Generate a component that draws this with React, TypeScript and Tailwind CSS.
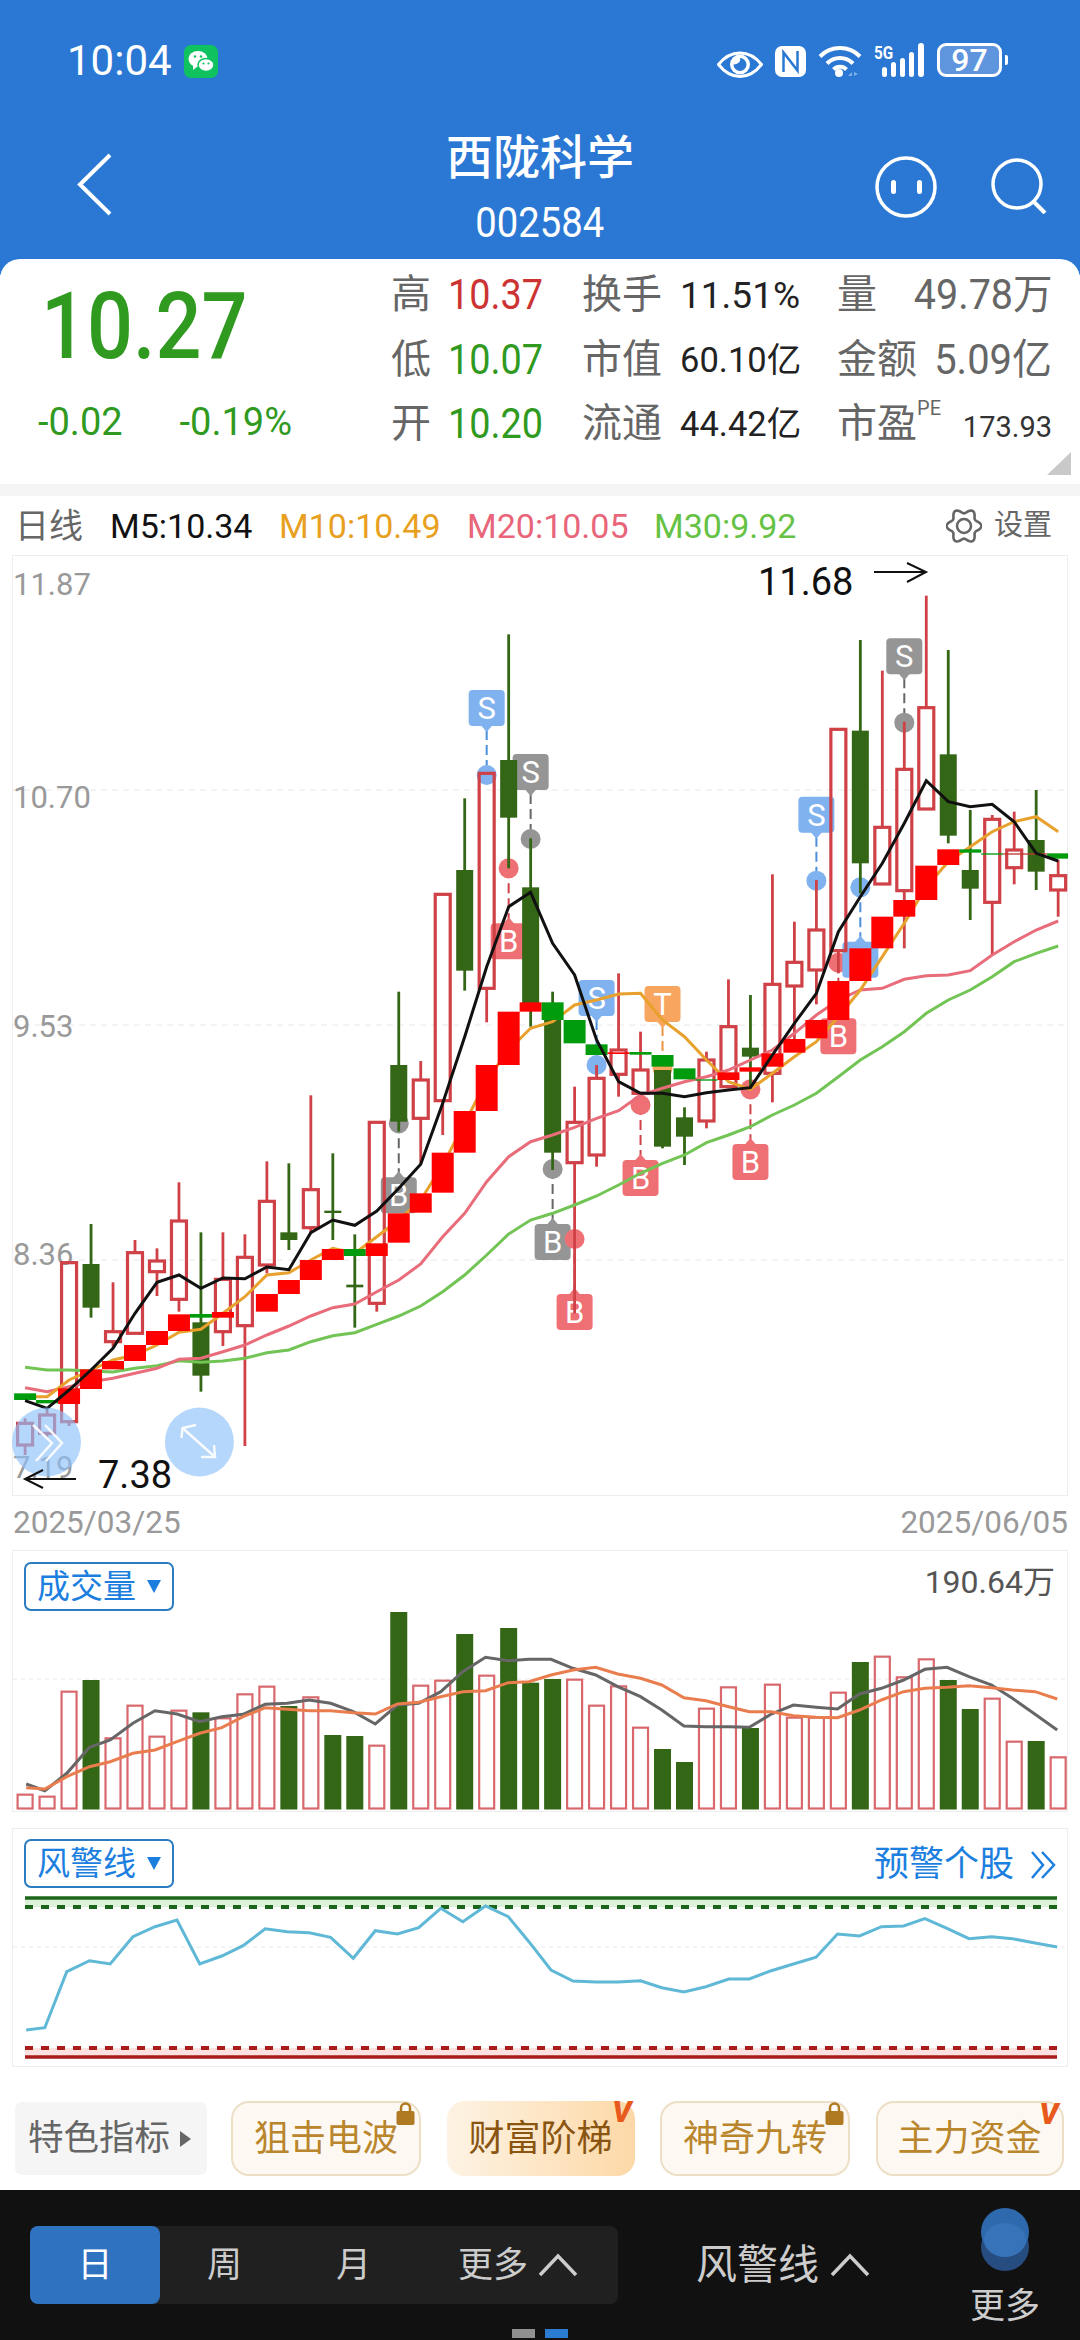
import React from "react";

const X = (i: number) => 25.1 + 21.98 * i;
const a = (z: number) => 540 + z / 3;
const b = (z: number) => 1040 + z / 3;

type C = ["h" | "g", number, number, number, number];
const candles: C[] = [
  ["h", b(1135), b(1150), b(1215), b(1245)],
  ["h", b(1110), b(1125), b(1180), b(1190)],
  ["h", b(668), b(668), b(1145), b(1158)],
  ["g", b(552), b(672), b(803), b(833)],
  ["h", b(727), b(875), b(905), b(920)],
  ["h", b(600), b(638), b(880), b(880)],
  ["h", b(625), b(663), b(695), b(768)],
  ["h", b(427), b(543), b(778), b(815)],
  ["g", b(577), b(847), b(1007), b(1055)],
  ["h", b(577), b(718), b(875), b(918)],
  ["h", b(583), b(652), b(857), b(1218)],
  ["h", b(364), b(484), b(675), b(700)],
  ["g", b(370), b(577), b(600), b(630)],
  ["h", b(166), b(449), b(563), b(580)],
  ["g", b(340), b(512), b(519), b(600)],
  ["g", b(583), b(734), b(742), b(863)],
  ["h", b(247), b(247), b(790), b(815)],
  ["g", a(1355), b(75), b(245), b(275)],
  ["h", b(63), b(120), b(235), b(370)],
  ["h", a(1063), a(1063), b(182), b(285)],
  ["g", a(775), a(990), a(1292), a(1352)],
  ["h", a(700), a(700), a(1345), a(1447)],
  ["g", a(283), a(660), a(833), a(985)],
  ["g", a(895), a(1042), a(1390), a(1460)],
  ["g", a(1355), a(1390), b(338), b(390)],
  ["h", b(140), b(247), b(368), b(820)],
  ["h", b(75), b(115), b(345), b(380)],
  ["h", a(1300), b(30), b(103), b(170)],
  ["h", a(1475), b(90), b(160), b(165)],
  ["g", b(90), b(90), b(320), b(325)],
  ["g", b(202), b(232), b(290), b(375)],
  ["h", b(35), b(60), b(243), b(265)],
  ["h", a(1318), a(1460), b(140), b(145)],
  ["g", a(1365), a(1523), b(50), b(150)],
  ["h", a(1003), a(1333), b(100), b(187)],
  ["h", a(1145), a(1267), a(1338), a(1500)],
  ["h", a(1020), a(1170), a(1290), a(1393)],
  ["h", a(568), a(568), a(1232), a(1300)],
  ["g", a(300), a(572), a(970), a(1060)],
  ["h", a(392), a(862), a(1032), a(1032)],
  ["h", a(545), a(688), a(1052), a(1225)],
  ["h", a(167), a(503), a(807), a(807)],
  ["g", a(330), a(643), a(887), a(910)],
  ["g", a(810), a(990), a(1046), a(1140)],
  ["h", a(825), a(838), a(1087), a(1245)],
  ["h", a(815), a(930), a(983), a(1033)],
  ["g", a(750), a(900), a(995), a(1050)],
  ["h", a(960), a(1007), a(1050), a(1130)],
];

const G = "#009c0e";
const R = "#ff0000";
const blocks: [number, number, number, string][] = [
  [0, b(1060), b(1080), G], [1, b(1080), b(1090), G], [2, b(1045), b(1092), R], [3, b(988), b(1047), R],
  [4, b(963), b(988), R], [5, b(915), b(963), R], [6, b(873), b(915), R], [7, b(823), b(873), R],
  [8, b(822), b(833), G], [9, b(816), b(833), R], [11, b(762), b(815), R], [12, b(720), b(762), R],
  [13, b(660), b(720), R], [14, b(627), b(660), R], [15, b(627), b(648), G], [16, b(610), b(648), R],
  [17, b(520), b(608), R], [18, b(460), b(518), R], [19, b(338), b(458), R], [20, b(213), b(338), R],
  [21, b(75), b(213), R], [22, a(1415), b(75), R], [23, a(1387), a(1415), R], [24, a(1387), a(1440), G],
  [25, a(1440), a(1510), G], [26, a(1513), a(1545), G], [27, b(37), b(42), R], [28, b(36), b(44), G],
  [29, b(45), b(80), G], [30, b(85), b(118), G], [31, b(118), b(122), G], [32, b(97), b(120), R],
  [33, b(82), b(95), R], [34, b(40), b(80), R], [35, a(1497), a(1538), R], [36, a(1440), a(1495), R],
  [37, a(1323), a(1440), R], [38, a(1225), a(1323), R], [39, a(1130), a(1225), R], [40, a(1080), a(1130), R],
  [41, a(977), a(1080), R], [42, a(928), a(975), R], [43, a(928), a(938), G], [44, a(940), a(944), G],
  [45, a(940), a(944), "#c03a30"], [46, a(940), a(944), "#c03a30"], [47, a(940), a(956), G],
];

const black = [b(1082), b(1105), b(1050), b(990), b(925), b(820), b(727), b(705), b(745), b(714), b(716), b(681), b(689), b(578), b(540), b(556), b(513), b(445), b(373), b(190), b(-10), a(1280), a(1100), a(1057), a(1210), a(1305), a(1500), b(125), b(160), b(160), b(170), b(158), b(150), b(143), b(45), a(1450), a(1360), a(1175), a(1070), a(970), a(850), a(722), a(785), a(800), a(793), a(845), a(940), a(963)];
const orange = [b(1070), b(1070), b(1020), b(990), b(960), b(945), b(915), b(877), b(868), b(820), b(770), b(705), b(698), b(660), b(625), b(640), b(590), b(540), b(480), b(375), b(250), b(120), b(30), a(1465), a(1445), a(1395), a(1380), a(1362), a(1360), a(1440), a(1490), b(60), b(125), b(148), b(100), b(50), b(5), a(1430), a(1350), a(1250), a(1150), a(1040), a(965), a(920), a(875), a(845), a(830), a(875)];
const pink = [b(1043), b(1055), b(1040), b(1025), b(1015), b(1000), b(985), b(958), b(955), b(935), b(915), b(885), b(858), b(828), b(803), b(792), b(755), b(720), b(672), b(590), b(520), b(425), b(350), b(305), b(285), b(262), b(235), b(212), b(165), b(145), b(125), b(110), b(90), b(60), b(30), a(1480), a(1425), a(1380), a(1350), a(1345), a(1318), a(1307), a(1305), a(1292), a(1245), a(1205), a(1170), a(1143)];
const lgreen = [b(982), b(990), b(990), b(993), b(996), b(985), b(977), b(962), b(967), b(963), b(955), b(938), b(930), b(905), b(887), b(878), b(853), b(828), b(798), b(755), b(705), b(645), b(582), b(540), b(520), b(495), b(468), b(435), b(400), b(370), b(345), b(308), b(285), b(260), b(225), b(195), b(160), b(110), b(60), b(20), a(1475), a(1420), a(1380), a(1350), a(1310), a(1265), a(1240), a(1218)];
const poly = (ys: number[]) => ys.map((y, i) => `${X(i).toFixed(1)},${y.toFixed(1)}`).join(" ");

type B = { i: number; t: string; top: number; dot: number; c: string; l: string };
const BLUE = "#7fb2ef", BL = "#4a8fdc", GRAY = "#959595", GL = "#666666", RED = "#ee7074", RL = "#cf4146", OR = "#f8a560", OL = "#ee9440";
const badges: B[] = [
  { i: 21, t: "S", top: a(450), dot: a(705), c: BLUE, l: BL },
  { i: 23, t: "S", top: a(642), dot: a(897), c: GRAY, l: GL },
  { i: 22, t: "B", top: a(1150), dot: a(985), c: RED, l: RL },
  { i: 17, t: "B", top: b(412), dot: b(250), c: GRAY, l: GL },
  { i: 26, t: "S", top: a(1320), dot: b(75), c: BLUE, l: BL },
  { i: 29, t: "T", top: a(1338), dot: b(85), c: OR, l: OL },
  { i: 24, t: "B", top: b(552), dot: b(387), c: GRAY, l: GL },
  { i: 25, t: "B", top: b(762), dot: b(597), c: RED, l: RL },
  { i: 28, t: "B", top: b(360), dot: b(195), c: RED, l: RL },
  { i: 33, t: "B", top: b(312), dot: b(148), c: RED, l: RL },
  { i: 37, t: "B", top: a(1435), dot: a(1268), c: RED, l: RL },
  { i: 36, t: "S", top: a(770), dot: a(1022), c: BLUE, l: BL },
  { i: 40, t: "S", top: a(295), dot: a(548), c: GRAY, l: GL },
  { i: 38, t: "S", top: a(1205), dot: a(1042), c: BLUE, l: BL },
];

const volTops = [764, 770, 455, 420, 595, 497, 590, 512, 517, 535, 463, 440, 498, 472, 585, 588, 617, 216, 437, 422, 282, 407, 264, 428, 417, 419, 497, 439, 563, 627, 666, 506, 442, 564, 434, 533, 533, 458, 366, 350, 412, 358, 420, 507, 476, 605, 603, 652];
const volGreen = new Set([3, 8, 12, 14, 15, 17, 20, 22, 23, 24, 29, 30, 33, 38, 42, 43, 46]);
const volGray: [number, number][] = [[38, 732], [65, 752], [97, 700], [130, 622], [160, 600], [193, 550], [225, 512], [257, 522], [290, 545], [322, 530], [353, 523], [385, 493], [417, 490], [449, 480], [480, 490], [513, 515], [545, 552], [577, 495], [608, 490], [640, 455], [672, 395], [705, 352], [738, 362], [768, 358], [800, 358], [832, 385], [865, 405], [897, 440], [930, 470], [961, 510], [993, 558], [1025, 560], [1058, 560], [1088, 562], [1120, 522], [1152, 495], [1185, 502], [1216, 507], [1248, 462], [1280, 445], [1312, 420], [1343, 388], [1375, 382], [1407, 410], [1440, 435], [1470, 475], [1503, 523], [1535, 570]];
const volOrange: [number, number][] = [[38, 743], [65, 747], [97, 710], [130, 680], [160, 665], [193, 640], [225, 630], [257, 605], [290, 580], [322, 563], [353, 530], [385, 503], [417, 508], [449, 512], [480, 512], [513, 518], [545, 522], [577, 492], [608, 487], [640, 470], [672, 455], [705, 452], [738, 428], [768, 425], [800, 405], [832, 390], [865, 382], [897, 402], [930, 415], [961, 435], [993, 473], [1025, 482], [1058, 500], [1088, 515], [1120, 515], [1152, 527], [1185, 532], [1216, 533], [1248, 510], [1280, 480], [1312, 455], [1343, 445], [1375, 442], [1407, 437], [1440, 443], [1470, 450], [1503, 455], [1535, 477]];
const cyan: [number, number][] = [[38, 630], [65, 623], [97, 455], [130, 422], [160, 432], [193, 350], [225, 320], [257, 300], [290, 432], [322, 408], [353, 377], [385, 326], [417, 335], [449, 338], [480, 352], [513, 415], [545, 332], [577, 342], [608, 323], [640, 265], [672, 305], [705, 258], [738, 290], [768, 365], [800, 450], [832, 483], [865, 486], [897, 486], [930, 482], [961, 503], [993, 516], [1025, 500], [1058, 477], [1088, 477], [1120, 452], [1152, 432], [1185, 412], [1216, 342], [1248, 348], [1280, 320], [1312, 318], [1343, 296], [1375, 325], [1407, 356], [1440, 350], [1470, 356], [1503, 369], [1535, 381]];
const zp = (pts: [number, number][], oy: number) => pts.map(([x, y]) => `${(x / 1.452).toFixed(1)},${(oy + y / 3).toFixed(1)}`).join(" ");

const gearPts = Array.from({ length: 72 }, (_, k) => {
  const t = (k / 72) * Math.PI * 2;
  const r = 15 + 2.4 * Math.cos(6 * t);
  return `${(18 + r * Math.cos(t)).toFixed(2)},${(18 + r * Math.sin(t)).toFixed(2)}`;
}).join(" ");

function MainChart() {
  return (
    <svg className="absolute -left-px -top-px" width={1056} height={941} viewBox="12 555 1056 941">
      <g stroke="#e8e8e8" strokeWidth={1} strokeDasharray="6 5">
        <line x1={13} x2={1067} y1={790} y2={790} />
        <line x1={13} x2={1067} y1={1025} y2={1025} />
        <line x1={13} x2={1067} y1={1260} y2={1260} />
      </g>
      <g className="font-[family-name:Roboto,sans-serif] text-[31px] fill-[#999999]">
        <text x={13} y={595}>11.87</text>
        <text x={13} y={808}>10.70</text>
        <text x={13} y={1037}>9.53</text>
        <text x={13} y={1265}>8.36</text>
        <text x={13} y={1478}>7.19</text>
      </g>
      {badges.map((d, k) => {
        const x = X(d.i);
        const up = d.dot < d.top;
        const pointer = up
          ? `${x - 6},${d.top + 1} ${x},${d.top - 6} ${x + 6},${d.top + 1}`
          : `${x - 6},${d.top + 35} ${x},${d.top + 42} ${x + 6},${d.top + 35}`;
        return (
          <g key={k}>
            <line x1={x} x2={x} y1={up ? d.dot : d.top + 40} y2={up ? d.top : d.dot} stroke={d.l} strokeWidth={2} strokeDasharray="10 5" />
            <circle cx={x} cy={d.dot} r={10} fill={d.c} />
            <rect x={x - 18} y={d.top} width={36} height={36} rx={4} fill={d.c} />
            <polygon points={pointer} fill={d.c} />
            <text x={x} y={d.top + 29} textAnchor="middle" className="font-[family-name:Roboto,sans-serif] text-[31px] fill-white">{d.t}</text>
          </g>
        );
      })}
      {candles.map(([k, hi, t, bt, lo], i) => {
        const x = X(i);
        const col = k === "h" ? "#cf4146" : "#336615";
        return (
          <g key={i}>
            {k === "h" ? (
              <>
                <line x1={x} x2={x} y1={hi} y2={t} stroke={col} strokeWidth={2.8} />
                <line x1={x} x2={x} y1={bt} y2={lo} stroke={col} strokeWidth={2.8} />
                <rect x={x - 7.5} y={t} width={15} height={bt - t} fill="none" stroke={col} strokeWidth={3.2} />
              </>
            ) : (
              <>
                <line x1={x} x2={x} y1={hi} y2={lo} stroke={col} strokeWidth={2.8} />
                <rect x={x - 8.5} y={t} width={17} height={bt - t} fill={col} />
              </>
            )}
          </g>
        );
      })}
      <polyline points={poly(lgreen)} fill="none" stroke="#72c455" strokeWidth={3} />
      <polyline points={poly(pink)} fill="none" stroke="#e96c7b" strokeWidth={3} />
      <polyline points={poly(orange)} fill="none" stroke="#e8a12c" strokeWidth={3} />
      {blocks.map(([i, t, bt, c]) => (
        <rect key={i} x={X(i) - 11} y={t} width={22} height={bt - t} fill={c} />
      ))}
      <polyline points={poly(black)} fill="none" stroke="#111111" strokeWidth={3} />
      <circle cx={46.5} cy={1442} r={34.5} fill="#8fc2fa" fillOpacity={0.65} />
      <circle cx={199.4} cy={1442} r={34.5} fill="#8fc2fa" fillOpacity={0.65} />
      <g fill="none" stroke="#ffffff" strokeWidth={2.5} opacity={0.9}>
        <polyline points="33,1425 52,1443 36,1461" />
        <polyline points="45,1425 62,1443 46,1461" />
        <line x1={182.5} y1={1428} x2={215} y2={1457} />
        <polyline points="196,1425 182.5,1428 181.5,1438" />
        <polyline points="201,1457 215,1457 214,1445" />
      </g>
      <g fill="none" stroke="#111111" strokeWidth={2}>
        <line x1={25} x2={76} y1={1479} y2={1479} />
        <polyline points="43,1470 25,1479 43,1488" />
        <line x1={874} x2={926} y1={572} y2={572} />
        <polyline points="907,563 926,572 907,582" />
      </g>
      <g className="font-[family-name:Roboto,sans-serif] text-[38px] fill-[#111111]">
        <text x={98} y={1488}>7.38</text>
        <text x={758} y={595}>11.68</text>
      </g>
    </svg>
  );
}

function VolChart() {
  return (
    <svg className="absolute -left-px -top-px" width={1056} height={262} viewBox="12 1550 1056 262">
      <line x1={13} x2={1067} y1={1679} y2={1679} stroke="#e8e8e8" strokeDasharray="4 4" />
      {volTops.map((z, i) => {
        const y = 1540 + z / 3;
        return volGreen.has(i) ? (
          <rect key={i} x={X(i) - 8.5} y={y} width={17} height={1809.5 - y} fill="#336615" />
        ) : (
          <rect key={i} x={X(i) - 7.5} y={y} width={15} height={1808.5 - y} fill="none" stroke="#d9686d" strokeWidth={2.2} />
        );
      })}
      <polyline points={zp(volGray, 1540)} fill="none" stroke="#666666" strokeWidth={3} />
      <polyline points={zp(volOrange, 1540)} fill="none" stroke="#ea7d4e" strokeWidth={3} />
    </svg>
  );
}

function WarnChart() {
  return (
    <svg className="absolute -left-px -top-px" width={1056} height={239} viewBox="12 1828 1056 239">
      <rect x={25} y={1898} width={1032} height={9} fill="#dcf2d8" />
      <rect x={25} y={2048} width={1032} height={9} fill="#fde0e0" />
      <line x1={25} x2={1057} y1={1898} y2={1898} stroke="#1c661c" strokeWidth={3.5} />
      <line x1={25} x2={1057} y1={1907} y2={1907} stroke="#1c661c" strokeWidth={4} strokeDasharray="8 8" />
      <line x1={25} x2={1057} y1={2048} y2={2048} stroke="#a91c1c" strokeWidth={4} strokeDasharray="8 8" />
      <line x1={25} x2={1057} y1={2057} y2={2057} stroke="#a91c1c" strokeWidth={3.5} />
      <line x1={13} x2={1067} y1={1947} y2={1947} stroke="#e8e8e8" strokeDasharray="4 4" />
      <polyline points={zp(cyan, 1820)} fill="none" stroke="#5fb8d6" strokeWidth={3} />
    </svg>
  );
}

function Dropdown({ label }: { label: string }) {
  return (
    <div className="flex h-[49px] w-[150px] items-center gap-[11px] rounded-[7px] border-2 border-[#2b7cc0] pl-[11px] text-[33px] leading-none text-[#1c7fe0]">
      <span>{label}</span>
      <span className="h-0 w-0 border-x-[7px] border-t-[13px] border-x-transparent border-t-[#1c7fe0]" />
    </div>
  );
}

function Lock() {
  return (
    <svg className="absolute -top-px right-[4px]" width={19} height={23} viewBox="0 0 19 23">
      <path d="M5 10V6a4.500 4.500 0 0 1 9 0v4" fill="none" stroke="#b07a22" strokeWidth={2.5} />
      <rect x={0.5} y={9} width={18} height={14} rx={2} fill="#b07a22" />
    </svg>
  );
}

const label = "text-[40px] leading-none text-[#666666]";
const priceCls = "inline-block origin-left scale-x-[0.9] text-[42px] leading-none";

function Stat({ l, v, cls }: { l: string; v: string; cls: string }) {
  return (
    <div className="flex h-[64.5px] items-center">
      <span className={`w-[57px] ${label}`}>{l}</span>
      <span className={cls}>{v}</span>
    </div>
  );
}

export default function App() {
  const g = "text-[38px] leading-none text-[#2f9a1f]";
  const k = "text-[34.500px] leading-none text-[#222222]";
  return (
    <div className="relative h-[2340px] w-[1080px] overflow-hidden bg-white font-[family-name:Roboto,'Noto_Sans_CJK_SC',sans-serif]">
      {/* blue header */}
      <div className="h-[275px] bg-[#2a78d4] text-white">
        <div className="flex h-[122px] items-start justify-between pl-[67px] pr-[72px] pt-[43px]">
          <div className="flex h-[36px] items-center gap-[12px]">
            <span className="text-[42px] leading-none">10:04</span>
            <svg width={34} height={33} viewBox="0 0 34 33">
              <rect width={34} height={33} rx={7} fill="#0fc25f" />
              <ellipse cx={14} cy={14} rx={9.500} ry={8} fill="#fff" />
              <polygon points="9,20 9,25 14,21" fill="#fff" />
              <ellipse cx={22} cy={20} rx={8} ry={6.500} fill="#fff" stroke="#0fc25f" strokeWidth={1.5} />
              <circle cx={11} cy={11.500} r={1.300} fill="#0fc25f" />
              <circle cx={17} cy={11.500} r={1.300} fill="#0fc25f" />
              <circle cx={19.500} cy={18.500} r={1.100} fill="#0fc25f" />
              <circle cx={24.500} cy={18.500} r={1.100} fill="#0fc25f" />
            </svg>
          </div>
          <div className="flex items-start">
            <svg width={46} height={36} viewBox="0 0 46 36">
              <path d="M1.500 21.500C9 12 16 10 23 10s14 2 21.500 11.500C37 31 30 33.500 23 33.500S9 31 1.500 21.500Z" fill="none" stroke="#fff" strokeWidth={3} />
              <circle cx={23} cy={21.500} r={10} fill="#fff" />
              <path d="M16.500 21.500a6.500 6.500 0 1 0 6.500-6.500c1 3 -1 6 -6.500 6.500Z" fill="#2a78d4" />
            </svg>
            <svg className="ml-[12px]" width={31} height={36} viewBox="0 0 31 36">
              <rect x={0} y={3} width={31} height={31} rx={7} fill="#fff" />
              <path d="M8.500 29V9.500L22.500 27.500V8" fill="none" stroke="#2a78d4" strokeWidth={2.5} />
            </svg>
            <svg className="ml-[12px]" width={44} height={36} viewBox="0 0 44 36">
              <g fill="none" stroke="#fff" strokeWidth={4}>
                <path d="M2 13.500a28 28 0 0 1 40 0" />
                <path d="M9 20.500a18 18 0 0 1 26 0" />
                <path d="M15.500 26.500a9 9 0 0 1 13 0" />
              </g>
              <circle cx={21} cy={30} r={4} fill="#fff" />
              <polygon points="30,33 34,29 34,33" fill="#7fb0e8" />
              <polygon points="36,29 40,31 36,33" fill="#7fb0e8" />
            </svg>
            <div className="relative ml-[11px] h-[36px] w-[51px]">
              <span className="absolute left-[1px] top-[1px] origin-left scale-x-[0.85] text-[18px] font-bold leading-none">5G</span>
              <svg className="absolute left-0 top-0" width={51} height={36} viewBox="0 0 51 36">
                <g fill="#fff">
                  <rect x={9} y={24} width={5} height={10} rx={2.500} />
                  <rect x={18} y={19} width={5} height={15} rx={2.500} />
                  <rect x={27} y={15} width={5} height={19} rx={2.500} />
                  <rect x={36} y={9} width={5} height={25} rx={2.500} />
                  <rect x={45} y={0} width={6} height={34} rx={3} />
                </g>
              </svg>
            </div>
            <div className="ml-[13px] flex h-[34px] w-[65px] items-center justify-center rounded-[9px] border-[3px] border-white bg-[#5e95dd] text-[32px] font-medium leading-none">97</div>
            <span className="ml-[3px] mt-[12px] h-[10px] w-[3px] rounded-r-[2px] bg-white" />
          </div>
        </div>
        <div className="grid h-[137px] grid-cols-[1fr_auto_1fr]">
          <div className="pl-[77px] pt-[31px]">
            <svg width={35} height={63} viewBox="0 0 35 63">
              <polyline points="33,2 3,31.500 33,61" fill="none" stroke="#fff" strokeWidth={4} />
            </svg>
          </div>
          <div className="flex flex-col items-center pt-[8px]">
            <span className="text-[47px] font-medium leading-[56px]">西陇科学</span>
            <span className="mt-[15px] origin-center scale-x-[0.91] text-[42px] leading-[44px]">002584</span>
          </div>
          <div className="flex items-start justify-end gap-[52px] pr-[33px] pt-[34px]">
            <svg width={65} height={62} viewBox="0 0 65 62">
              <circle cx={32} cy={31} r={29} fill="none" stroke="#fff" strokeWidth={3.500} />
              <rect x={17} y={24} width={5} height={14} rx={2.500} fill="#fff" />
              <rect x={43} y={24} width={5} height={14} rx={2.500} fill="#fff" />
            </svg>
            <svg className="mt-[2px]" width={56} height={56} viewBox="0 0 56 56">
              <circle cx={26} cy={26} r={24} fill="none" stroke="#fff" strokeWidth={3.500} />
              <line x1={42} y1={43} x2={54} y2={55} stroke="#fff" strokeWidth={4} />
            </svg>
          </div>
        </div>
      </div>

      {/* quote card */}
      <div className="relative -mt-[16px] flex h-[225px] rounded-t-[20px] bg-white">
        <div className="w-[391px] shrink-0">
          <div className="ml-[41px] mt-[22px] h-[92px] origin-left scale-x-[0.87] text-[93px] font-medium leading-[92px] text-[#2f9a1f]">10.27</div>
          <div className="ml-[38px] mt-[30px] flex gap-[57px]">
            <span className={g}>-0.02</span>
            <span className={g}>-0.19%</span>
          </div>
        </div>
        <div className="grid grid-cols-[191px_255px_215px] grid-rows-[64.5px_64.5px_64.5px] pt-[4px]">
          <Stat l="高" v="10.37" cls={`${priceCls} text-[#cc3333]`} />
          <div className="flex h-[64.5px] items-center"><span className={`w-[98px] ${label}`}>换手</span><span className="text-[37px] leading-none text-[#222222]">11.51%</span></div>
          <div className="flex h-[64.5px] items-center justify-between"><span className={label}>量</span><span className="origin-right scale-x-[0.94] text-[42px] leading-none text-[#666666]">49.78万</span></div>
          <Stat l="低" v="10.07" cls={`${priceCls} text-[#2f9a1f]`} />
          <div className="flex h-[64.5px] items-center"><span className={`w-[98px] ${label}`}>市值</span><span className={k}>60.10亿</span></div>
          <div className="flex h-[64.5px] items-center justify-between"><span className={label}>金额</span><span className="origin-right scale-x-[0.95] text-[42px] leading-none text-[#666666]">5.09亿</span></div>
          <Stat l="开" v="10.20" cls={`${priceCls} text-[#2f9a1f]`} />
          <div className="flex h-[64.5px] items-center"><span className={`w-[98px] ${label}`}>流通</span><span className={k}>44.42亿</span></div>
          <div className="flex h-[64.5px] items-center justify-between">
            <span className={`relative ${label}`}>市盈<sup className="absolute -right-[24px] top-[-6px] text-[20px] leading-none">PE</sup></span>
            <span className="mt-[6px] text-[29px] leading-none text-[#333333]">173.93</span>
          </div>
        </div>
        <svg className="absolute right-[9px] top-[193px]" width={24} height={23} viewBox="0 0 24 23">
          <polygon points="24,0 24,23 0,23" fill="#c9c9c9" />
        </svg>
      </div>

      <div className="h-[12px] bg-[#f5f5f5]" />

      {/* legend */}
      <div className="flex h-[59px] items-center pl-[15px] pr-[28px] text-[34px] leading-none">
        <span className="w-[95px] text-[#666666]">日线</span>
        <span className="w-[169px] text-[#111111]">M5:10.34</span>
        <span className="w-[188px] text-[#e8a020]">M10:10.49</span>
        <span className="w-[187px] text-[#e8657a]">M20:10.05</span>
        <span className="text-[#66c244]">M30:9.92</span>
        <span className="ml-auto flex items-center gap-[12px] text-[29px] text-[#666666]">
          <svg width={36} height={36} viewBox="0 0 36 36">
            <polygon points={gearPts} fill="none" stroke="#666666" strokeWidth={2.6} />
            <circle cx={18} cy={18} r={7} fill="none" stroke="#666666" strokeWidth={2.6} />
          </svg>
          设置
        </span>
      </div>

      {/* main chart */}
      <div className="relative ml-[12px] h-[941px] w-[1056px] border border-[#eeeeee]">
        <MainChart />
      </div>
      <div className="flex h-[54px] items-start justify-between pl-[13px] pr-[12px] pt-[7px] text-[31.500px] leading-[40px] text-[#999999]">
        <span>2025/03/25</span>
        <span>2025/06/05</span>
      </div>

      {/* volume */}
      <div className="relative ml-[12px] h-[262px] w-[1056px] border border-[#eeeeee]">
        <VolChart />
        <div className="absolute inset-x-0 top-[11px] flex items-start justify-between pl-[11px] pr-[12px]">
          <Dropdown label="成交量" />
          <span className="mt-[2px] text-[32px] leading-[36px] text-[#555555]">190.64万</span>
        </div>
      </div>

      {/* warning */}
      <div className="relative ml-[12px] mt-[16px] h-[239px] w-[1056px] border border-[#eeeeee]">
        <WarnChart />
        <div className="absolute inset-x-0 top-[10px] flex items-start justify-between pl-[11px] pr-[11px]">
          <Dropdown label="风警线" />
          <span className="mt-[6px] flex items-center gap-[16px] text-[35px] leading-[40px] text-[#1c7fe0]">
            预警个股
            <svg width={26} height={30} viewBox="0 0 26 30">
              <polyline points="2,2 13,15 2,28" fill="none" stroke="#1c7fe0" strokeWidth={2.500} />
              <polyline points="12,2 24,15 12,28" fill="none" stroke="#1c7fe0" strokeWidth={2.500} />
            </svg>
          </span>
        </div>
      </div>

      {/* chips */}
      <div className="ml-[15px] mt-[34px] flex h-[75px] items-center gap-[25.5px] text-[36px] leading-none">
        <div className="mr-[-1.5px] flex h-[73px] w-[192px] items-center gap-[10px] rounded-[7px] bg-[#f5f5f5] pl-[13px] text-[35.500px] text-[#666666]">
          特色指标
          <span className="h-0 w-0 border-y-[8px] border-l-[11px] border-y-transparent border-l-[#666666]" />
        </div>
        <div className="relative flex h-[75px] w-[190px] items-center justify-center rounded-[18px] border-2 border-[#ecdfc6] bg-[#fdf9f2] text-[#b9862d]">狙击电波<Lock /></div>
        <div className="relative flex h-[75px] w-[188px] items-center justify-center rounded-[18px] bg-linear-to-r from-[#fdf3e4] to-[#fdd8a6] text-[#8a5510]">财富阶梯<span className="absolute right-[3px] top-[-6px] text-[30px] font-black italic leading-[34px] text-[#e8591c]">V</span></div>
        <div className="relative flex h-[75px] w-[190px] items-center justify-center rounded-[18px] border-2 border-[#ecdfc6] bg-[#fdf9f2] text-[#b9862d]">神奇九转<Lock /></div>
        <div className="relative flex h-[75px] w-[188px] items-center justify-center rounded-[18px] border-2 border-[#ecdfc6] bg-[#fdf9f2] text-[#b9862d]">主力资金<span className="absolute right-[3px] top-[-6px] text-[30px] font-black italic leading-[34px] text-[#e8591c]">V</span></div>
      </div>

      {/* bottom bar */}
      <div className="relative mt-[14px] flex h-[150px] bg-[#111111] pl-[30px] pt-[36px] text-[#cccccc]">
        <div className="flex h-[78px] w-[588px] rounded-[8px] bg-[#202020] text-[35px] leading-none">
          <div className="flex w-[130px] items-center justify-center rounded-[8px] bg-[#2f72c0] text-white">日</div>
          <div className="flex w-[129px] items-center justify-center">周</div>
          <div className="flex w-[129px] items-center justify-center">月</div>
          <div className="flex w-[200px] items-center justify-center gap-[10px]">
            更多
            <svg width={40} height={24} viewBox="0 0 40 24"><polyline points="2,22 20,3 38,22" fill="none" stroke="#cccccc" strokeWidth={3.500} /></svg>
          </div>
        </div>
        <div className="ml-[78px] flex h-[78px] items-center gap-[11px] text-[41px] leading-none">
          风警线
          <svg width={40} height={24} viewBox="0 0 40 24"><polyline points="2,22 20,3 38,22" fill="none" stroke="#cccccc" strokeWidth={3.500} /></svg>
        </div>
        <div className="absolute right-[40px] top-[18px] flex w-[70px] flex-col items-center text-[35px] leading-none">
          <svg width={48} height={63} viewBox="0 0 48 63">
            <ellipse cx={24} cy={39} rx={24} ry={24} fill="#264c80" />
            <ellipse cx={24} cy={24} rx={24} ry={24} fill="#2e69ad" />
            <ellipse cx={24} cy={32} rx={21} ry={17} fill="#3773b8" />
          </svg>
          <span className="mt-[18px]">更多</span>
        </div>
        <div className="absolute bottom-[2px] left-[512px] flex gap-[10px]">
          <span className="h-[9px] w-[23px] bg-[#909090]" />
          <span className="h-[9px] w-[23px] bg-[#2b7bd0]" />
        </div>
      </div>
    </div>
  );
}
